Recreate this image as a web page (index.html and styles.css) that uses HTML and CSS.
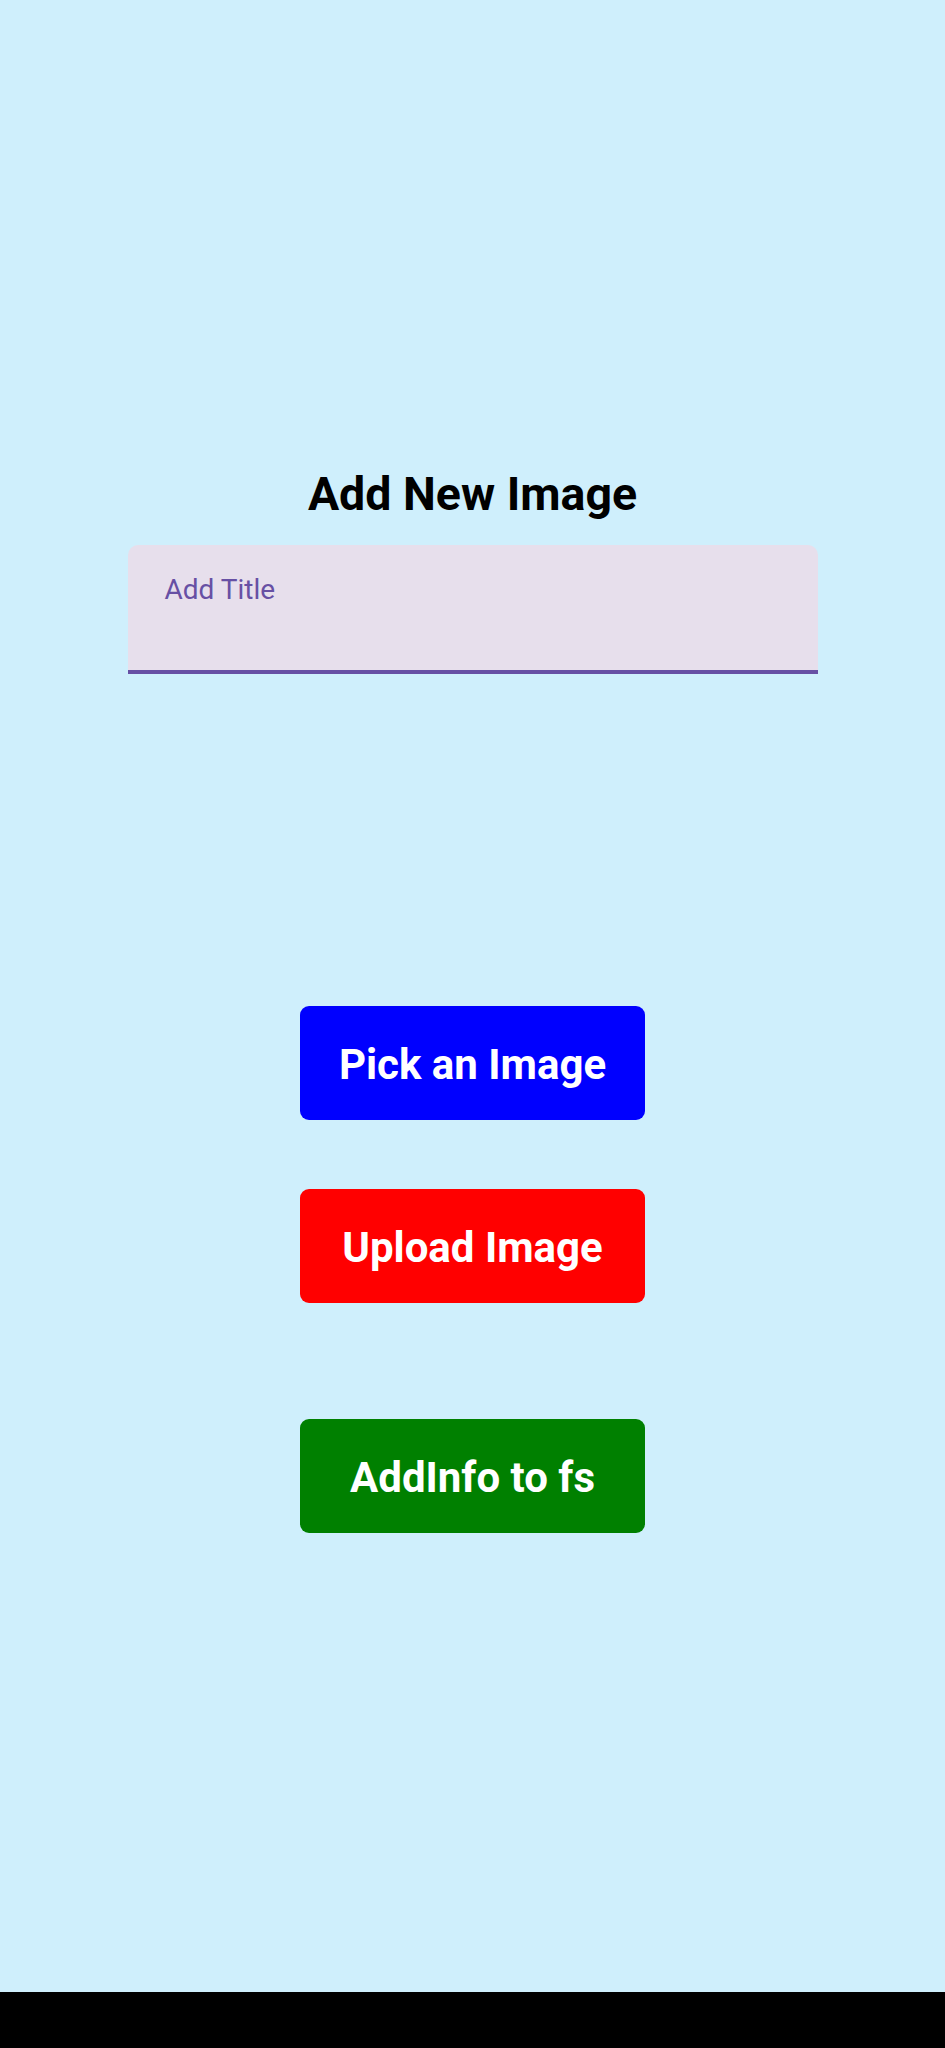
FILE: index.html
```html
<!DOCTYPE html>
<html>
<head>
<meta charset="utf-8">
<title>Add New Image</title>
<link rel="stylesheet" href="styles.css">
</head>
<body>
<div class="screen">
  <main class="content">
    <h1 class="title">Add New Image</h1>
    <div class="field">
      <span class="field-label">Add Title</span>
    </div>
    <div class="buttons">
      <button class="btn btn-pick">Pick an Image</button>
      <button class="btn btn-upload">Upload Image</button>
      <button class="btn btn-add">AddInfo to fs</button>
    </div>
  </main>
  <div class="navbar"></div>
</div>
</body>
</html>
```
FILE: styles.css
```css
html, body {
  margin: 0;
  padding: 0;
}
body {
  font-family: Roboto, "Noto Sans", sans-serif;
  background: #cfeffc;
}
.screen {
  width: 945px;
  height: 2048px;
  display: flex;
  flex-direction: column;
  background: #cfeffc;
}
.content {
  flex: 1;
  display: flex;
  flex-direction: column;
  align-items: center;
  padding-top: 466px;
}
.title {
  margin: 0;
  font-size: 46.5px;
  line-height: 56px;
  font-weight: 700;
  color: #000;
}
.field {
  margin-top: 23px;
  width: 690px;
  height: 125px;
  box-sizing: content-box;
  background: #e7dfec;
  border-radius: 10px 10px 0 0;
  border-bottom: 4px solid #6750a4;
  padding: 0;
  display: flex;
  flex-direction: column;
}
.field-label {
  padding: 29px 0 0 37px;
  font-size: 28px;
  line-height: 32px;
  color: #6750a4;
}
.buttons {
  margin-top: 332px;
  display: flex;
  flex-direction: column;
  align-items: center;
}
.btn {
  width: 345px;
  height: 114px;
  border: none;
  border-radius: 9px;
  color: #fff;
  font-family: Roboto, "Noto Sans", sans-serif;
  font-size: 42px;
  font-weight: 700;
  display: flex;
  align-items: center;
  justify-content: center;
  padding: 0;
  padding-top: 2px;
}
.btn-pick {
  background: #0000ff;
}
.btn-upload {
  margin-top: 69px;
  background: #ff0000;
}
.btn-add {
  margin-top: 116px;
  background: #008000;
}
.navbar {
  height: 56px;
  background: #000;
  flex: none;
}
```
